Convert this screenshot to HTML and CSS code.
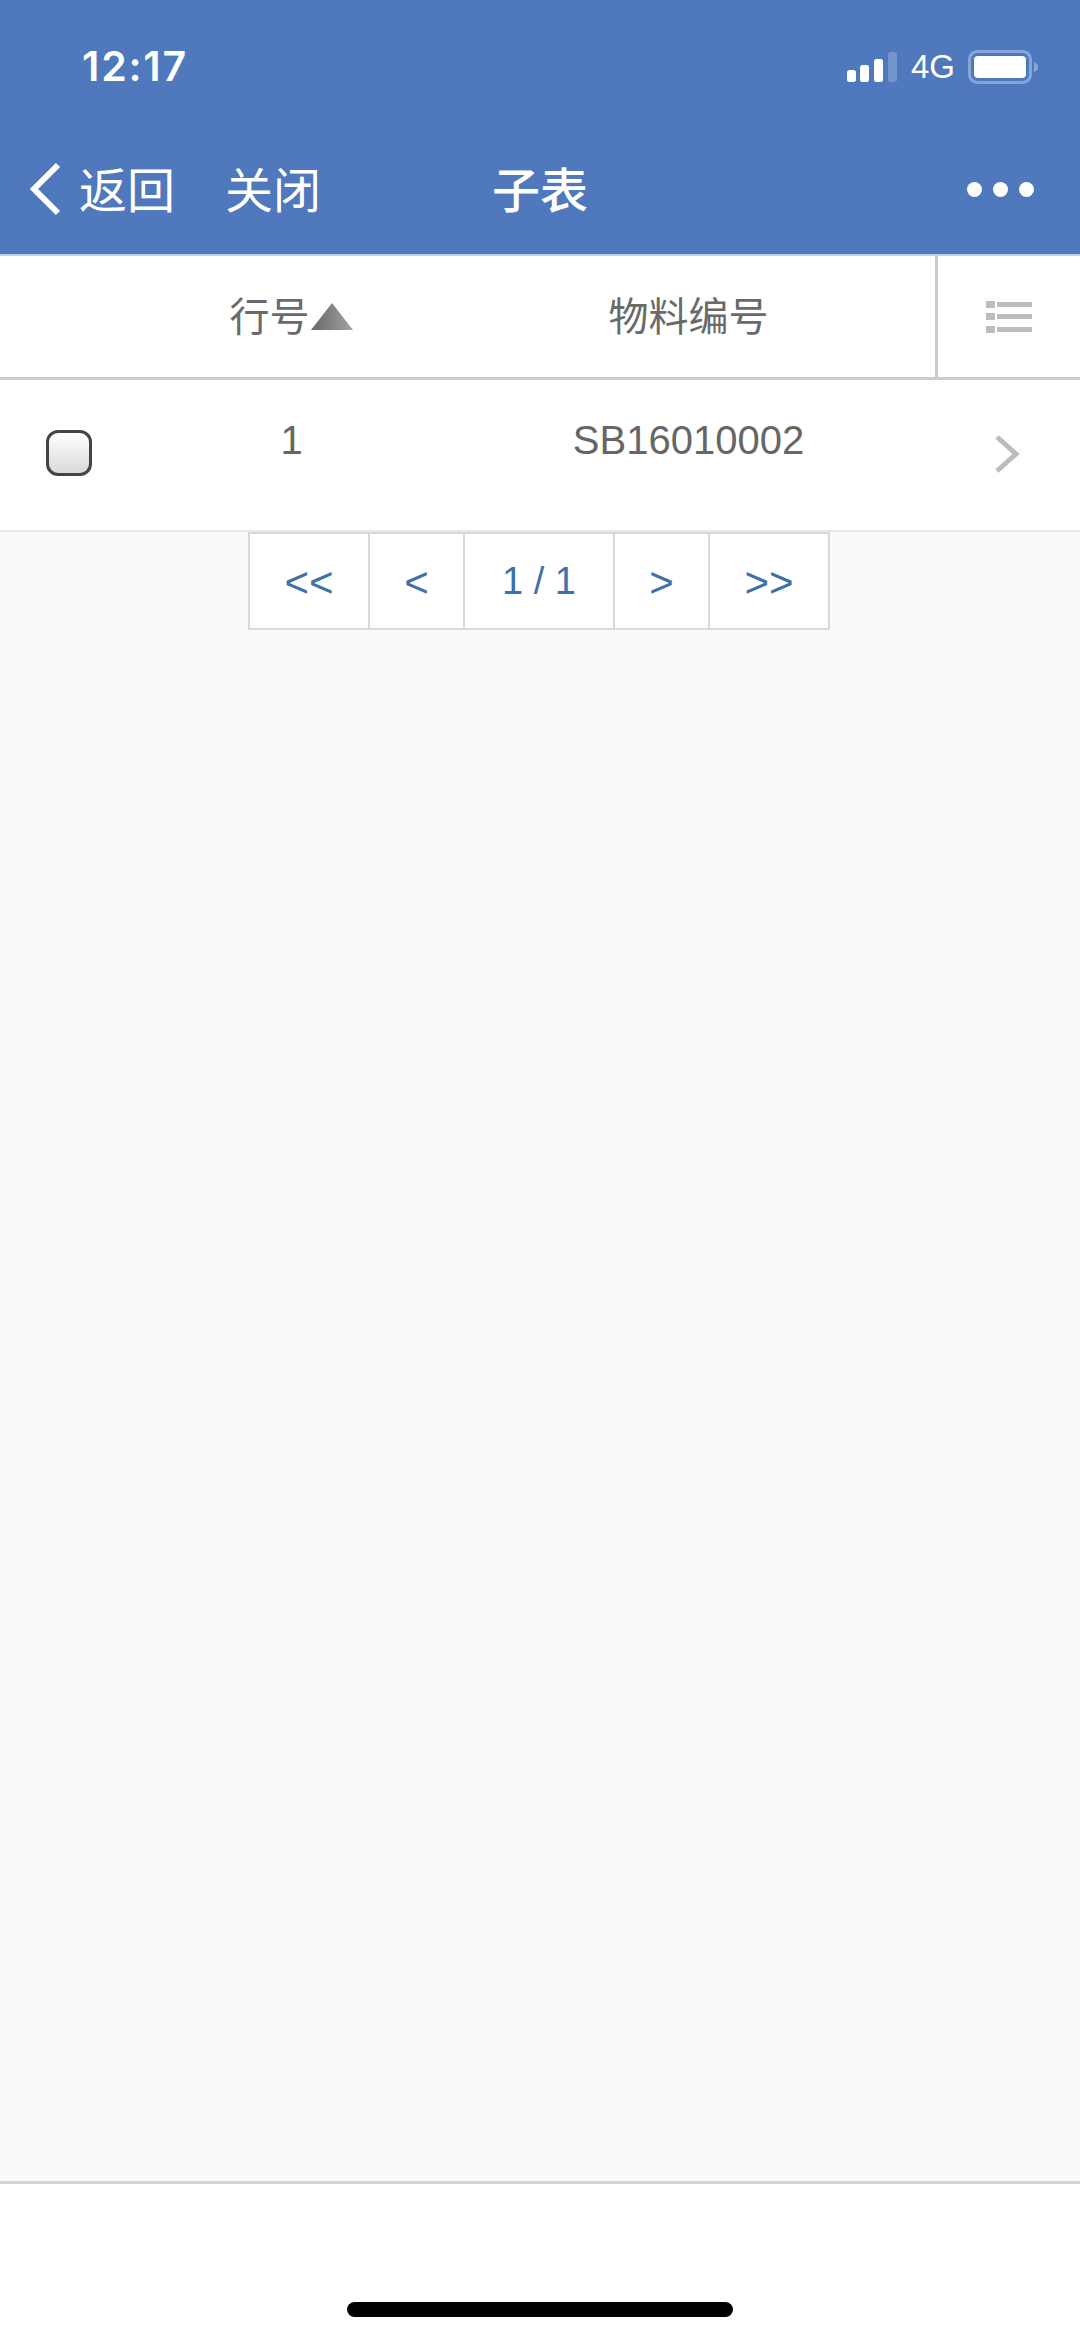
FILE: index.html
```html
<!DOCTYPE html>
<html lang="zh-CN">
<head>
    <meta charset="UTF-8">
    <meta name="viewport" content="width=device-width, initial-scale=1.0">
    <title>子表</title>
    <link rel="stylesheet" href="styles.css">
</head>
<body>
    <header class="top-bar">
        <div class="status-bar">
            <span class="status-time">12:17</span>
            <div class="status-right">
                <svg class="signal-icon" width="50" height="30" viewBox="0 0 50 30">
                    <rect x="0" y="18" width="9" height="12" rx="2.5" fill="#fff"/>
                    <rect x="13" y="13" width="9" height="17" rx="2.5" fill="#fff"/>
                    <rect x="27" y="7" width="9" height="23" rx="2.5" fill="#fff"/>
                    <rect x="41" y="0" width="9" height="30" rx="2.5" fill="#7396cf"/>
                </svg>
                <span class="status-net">4G</span>
                <svg class="battery-icon" width="70" height="34" viewBox="0 0 70 34">
                    <rect x="1.5" y="1.5" width="61" height="31" rx="8" fill="none" stroke="#86a5d8" stroke-width="3"/>
                    <rect x="6" y="6" width="52" height="22" rx="4" fill="#fff"/>
                    <path d="M66 12 C69 13 70 15 70 17 C70 19 69 21 66 22 Z" fill="#86a5d8"/>
                </svg>
            </div>
        </div>
        <nav class="nav-bar">
            <div class="nav-left">
                <svg class="back-icon" width="34" height="54" viewBox="0 0 34 54">
                    <path d="M30 3 L6 27 L30 51" fill="none" stroke="#fff" stroke-width="6"/>
                </svg>
                <span class="nav-link">返回</span>
                <span class="nav-link nav-close">关闭</span>
            </div>
            <h1 class="nav-title">子表</h1>
            <div class="nav-more">
                <i></i><i></i><i></i>
            </div>
        </nav>
    </header>

    <main class="content">
        <section class="table-head">
            <div class="col">行号<svg class="sort-icon" width="44" height="30" viewBox="0 0 44 30">
                <defs>
                    <linearGradient id="sortFill" x1="0" y1="0" x2="1" y2="0">
                        <stop offset="0" stop-color="#666"/>
                        <stop offset="1" stop-color="#a4a4a4"/>
                    </linearGradient>
                </defs>
                <path d="M22 1 L43 28 L1 28 Z" fill="url(#sortFill)"/>
            </svg></div>
            <div class="col">物料编号</div>
            <div class="head-menu">
                <svg class="menu-icon" width="46" height="34" viewBox="0 0 46 34" fill="#bdbdbd">
                    <rect x="0" y="1" width="9" height="7"/>
                    <rect x="0" y="13" width="9" height="7"/>
                    <rect x="0" y="26" width="9" height="7"/>
                    <rect x="11" y="2" width="35" height="5"/>
                    <rect x="11" y="14" width="35" height="5"/>
                    <rect x="11" y="27" width="35" height="5"/>
                </svg>
            </div>
        </section>

        <section class="table-row">
            <span class="check-box"></span>
            <div class="col">1</div>
            <div class="col">SB16010002</div>
            <svg class="row-arrow" width="26" height="38" viewBox="0 0 26 38">
                <path d="M3 2 L22 19 L3 36" fill="none" stroke="#bcbcbc" stroke-width="5"/>
            </svg>
        </section>

        <div class="pager">
            <a class="page-btn page-first">&lt;&lt;</a>
            <a class="page-btn page-prev">&lt;</a>
            <a class="page-btn page-num">1 / 1</a>
            <a class="page-btn page-next">&gt;</a>
            <a class="page-btn page-last">&gt;&gt;</a>
        </div>
    </main>

    <footer class="bottom-bar">
        <span class="home-bar"></span>
    </footer>
</body>
</html>
```

FILE: styles.css
```css
* {
    margin: 0;
    padding: 0;
    box-sizing: border-box;
}

body {
    width: 1080px;
    height: 2339px;
    display: flex;
    flex-direction: column;
    background: #fff;
    color: #666;
    font-family: "Liberation Sans", "Noto Sans CJK SC", sans-serif;
    font-size: 40px;
    overflow: hidden;
}

.top-bar {
    background: #4f78bd;
    color: #fff;
    height: 256px;
    border-bottom: 2px solid #c3d3ea;
}

.status-bar {
    height: 130px;
    display: flex;
    justify-content: space-between;
    align-items: flex-start;
    padding: 44px 42px 0 82px;
}

.status-time {
    font-family: Inter, "Liberation Sans", sans-serif;
    font-size: 41px;
    font-weight: 600;
    letter-spacing: 1.8px;
    line-height: 44px;
}

.status-right {
    display: flex;
    align-items: center;
    padding-top: 6px;
}

.status-net {
    font-size: 33px;
    line-height: 34px;
    margin: 0 13px 0 14px;
}

.nav-bar {
    height: 124px;
    position: relative;
    display: flex;
    justify-content: space-between;
    align-items: center;
    padding: 0 46px 10px 28px;
}

.nav-left {
    display: flex;
    align-items: center;
}

.nav-link {
    font-size: 48px;
}

.back-icon {
    margin: 4px 17px 0 0;
}

.nav-close {
    margin-left: 50px;
}

.nav-title {
    position: absolute;
    left: 492px;
    font-size: 48px;
    font-weight: 500;
}

.nav-more {
    display: flex;
    gap: 11px;
    margin-top: 4px;
}

.nav-more i {
    width: 15px;
    height: 15px;
    border-radius: 50%;
    background: #fff;
}

.content {
    flex: 1;
    background: #fafafa;
}

.table-head,
.table-row {
    display: flex;
    background: #fff;
    padding-left: 93px;
}

.col {
    width: 397px;
    text-align: center;
}

.table-head {
    height: 124px;
    align-items: center;
    border-bottom: 3px solid #ccc;
    color: #6a6a6a;
}

.table-head .col {
    display: flex;
    align-items: center;
    justify-content: center;
    padding-bottom: 6px;
}

.sort-icon {
    margin-top: 6px;
}

.head-menu {
    margin-left: auto;
    width: 145px;
    height: 100%;
    display: flex;
    align-items: center;
    justify-content: center;
    border-left: 3px solid #ccc;
}

.menu-icon {
    filter: blur(0.7px);
}

.table-row {
    height: 152px;
    position: relative;
    padding-top: 38px;
    border-bottom: 2px solid #e8e8e8;
}

.check-box {
    position: absolute;
    left: 46px;
    top: 50px;
    width: 46px;
    height: 46px;
    border: 3px solid #444;
    border-radius: 12px;
    background: linear-gradient(#fff, #d9d9d9);
}

.row-arrow {
    position: absolute;
    left: 994px;
    top: 55px;
}

.pager {
    display: flex;
    justify-content: center;
}

.page-btn {
    height: 98px;
    display: flex;
    align-items: center;
    justify-content: center;
    background: #fff;
    color: #3d72a8;
    border: 2px solid #d9d9d9;
    margin-left: -2px;
    padding-top: 4px;
    font-size: 42px;
}

.page-first, .page-last {
    width: 122px;
}

.page-prev, .page-next {
    width: 97px;
}

.page-num {
    width: 152px;
    font-size: 38px;
    padding-top: 0;
}

.bottom-bar {
    height: 158px;
    display: flex;
    justify-content: center;
    background: #fff;
    border-top: 3px solid #d4d4d4;
    padding-top: 118px;
}

.home-bar {
    width: 386px;
    height: 15px;
    border-radius: 8px;
    background: #000;
}
```
